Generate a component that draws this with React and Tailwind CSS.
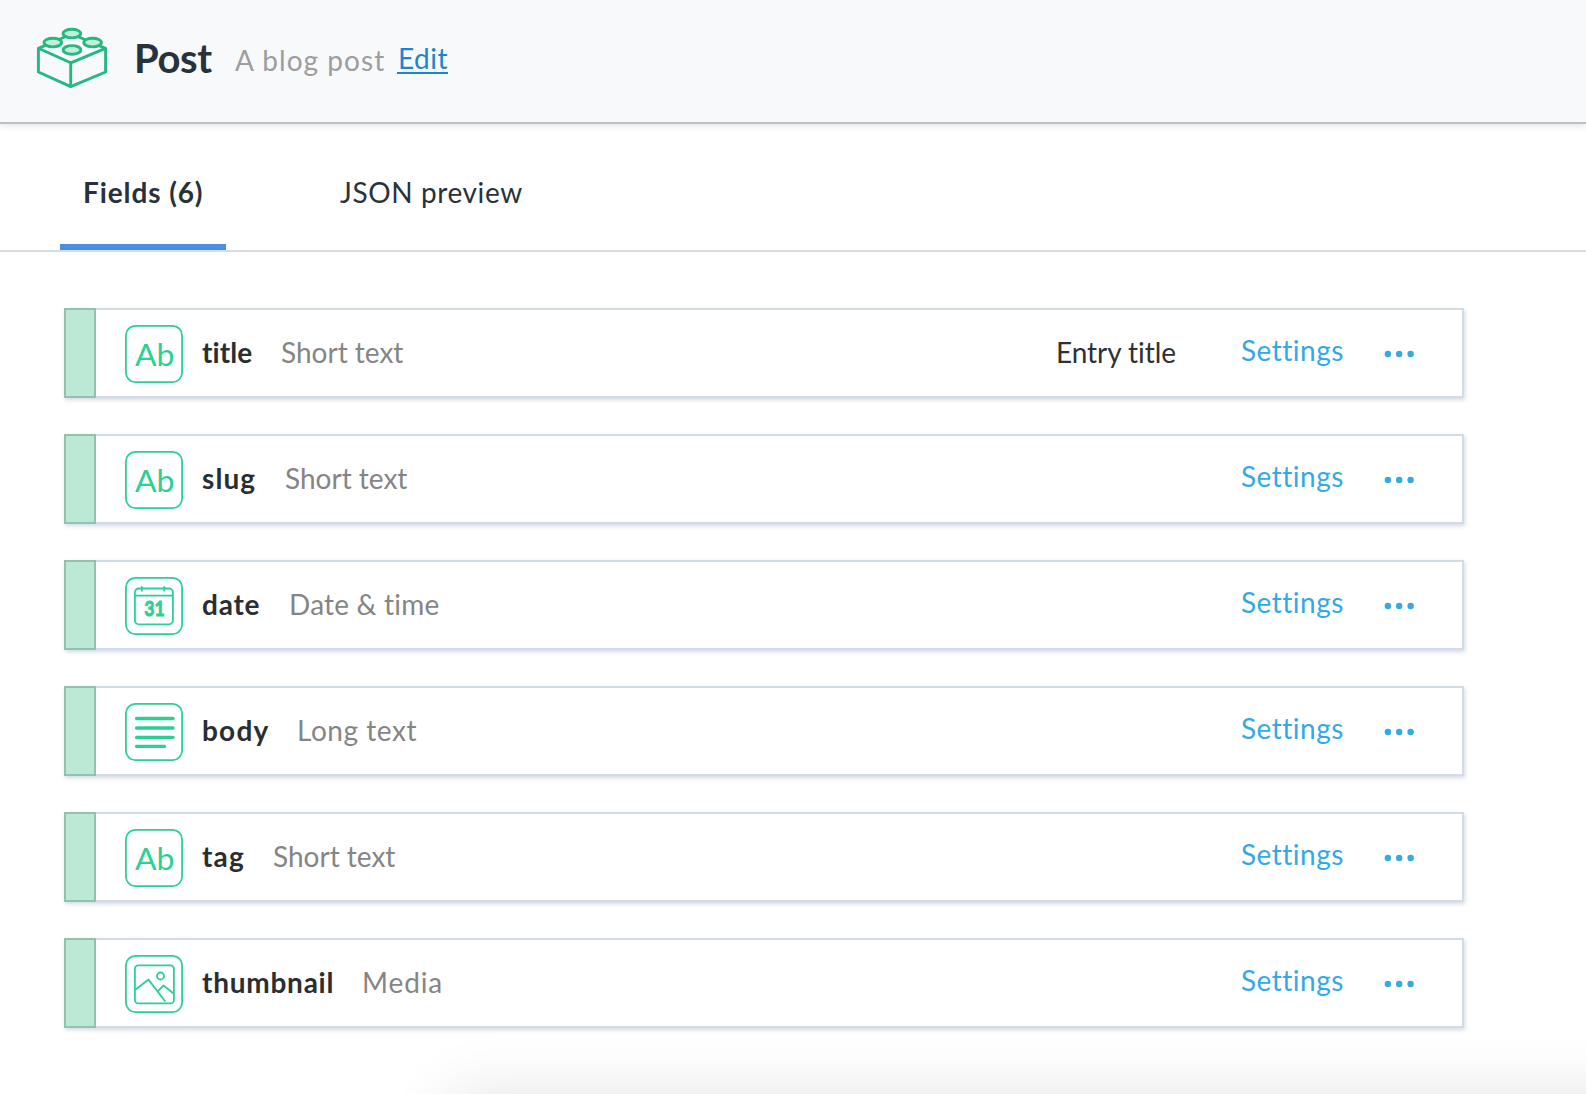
const FIELDS = [
  { icon: "text", name: "title", nameCls: "w-[79px] tracking-[0.1px]", type: "Short text", typeCls: "tracking-[0px]", note: "Entry title" },
  { icon: "text", name: "slug", nameCls: "w-[83px] tracking-[1.1px]", type: "Short text", typeCls: "tracking-[0px]" },
  { icon: "date", name: "date", nameCls: "w-[87px] tracking-[0.8px]", type: "Date & time", typeCls: "tracking-[0.2px]" },
  { icon: "long", name: "body", nameCls: "w-[95px] tracking-[1.2px]", type: "Long text", typeCls: "tracking-[0.55px]" },
  { icon: "text", name: "tag", nameCls: "w-[71px] tracking-[1.2px]", type: "Short text", typeCls: "tracking-[0px]" },
  { icon: "media", name: "thumbnail", nameCls: "w-[160px] tracking-[0.75px]", type: "Media", typeCls: "tracking-[0.9px]" },
];

function BrickLogo() {
  return (
    <svg className="h-[64px] w-[74px] shrink-0" viewBox="0 0 74 64" fill="none" stroke="#25b880" strokeWidth="2.9" strokeLinejoin="round">
      <path d="M2.4 22.3 35.7 8 69.6 22.3V46L34.7 60.6 2.4 46z" />
      <path d="M2.4 22.3 34.7 36.8 69.6 22.3M34.7 36.8V60.6" />
      <g fill="#c1f0d7">
        <ellipse cx="35.9" cy="7.6" rx="8.8" ry="4.3" />
        <ellipse cx="16.8" cy="16.6" rx="8.8" ry="4.3" />
        <ellipse cx="56.6" cy="16.6" rx="8.8" ry="4.3" />
        <ellipse cx="36" cy="23.9" rx="8.8" ry="4.3" />
      </g>
    </svg>
  );
}

function FieldIcon({ kind }) {
  return (
    <svg className="ml-[29px] h-[58px] w-[58px] shrink-0" viewBox="0 0 58 58" fill="none" stroke="#2bd093" strokeWidth="1.8">
      <rect x="0.9" y="0.9" width="56.2" height="56.2" rx="9.5" strokeWidth="1.8" />
      {kind === "text" && (
        <text x="10" y="41" fill="#2bd093" stroke="none" textLength="39.5" lengthAdjust="spacingAndGlyphs" className="font-[Lato] text-[30px]">
          Ab
        </text>
      )}
      {kind === "long" && (
        <path d="M11.6 15.5H48M11.6 25H48M11.6 34.4H48M11.6 43.4H39.5" strokeWidth="3.4" strokeLinecap="round" />
      )}
      {kind === "date" && (
        <>
          <rect x="9.9" y="11.5" width="38" height="35.8" rx="4" />
          <path d="M10 18.7H48M16.8 9.3V14.5M39.3 9.3V14.5" />
          <text x="19.2" y="38.8" fill="#2bd093" stroke="#2bd093" strokeWidth="0.9" textLength="20.5" lengthAdjust="spacingAndGlyphs" className="font-[Lato] text-[21px] font-bold">
            31
          </text>
        </>
      )}
      {kind === "media" && (
        <>
          <rect x="9.9" y="10.4" width="39" height="38" rx="3.5" />
          <circle cx="35.5" cy="21" r="3.5" />
          <path d="M10.3 34.7 23.5 24.6 40.3 46.5M32.8 36.2 38.6 30.5 48.5 38.5" />
        </>
      )}
    </svg>
  );
}

function FieldRow({ field }) {
  return (
    <li className="flex h-[90px] w-[1400px] border-2 border-l-0 border-[#d3dbe4] bg-white shadow-[1px_2px_4px_rgba(95,120,155,0.27)]">
      <div className="-my-[2px] w-[32px] shrink-0 border-2 border-[#90c2ad] bg-[#bce9d5]" />
      <div className="flex h-[86px] flex-1 items-start whitespace-nowrap text-[28px] leading-[36px]">
        <div className="pt-[15px]">
          <FieldIcon kind={field.icon} />
        </div>
        <span className={"ml-[19px] mt-[24px] shrink-0 font-bold text-[#2b2e31] " + field.nameCls}>{field.name}</span>
        <span className={"mt-[24px] text-[#858585] " + field.typeCls}>{field.type}</span>
        {field.note && <span className="ml-auto mr-[65px] mt-[24px] tracking-[-0.05px] text-[#2f3133]">{field.note}</span>}
        <a className={"mt-[22px] w-[103px] tracking-[0.5px] text-[#33a9e5] " + (field.note ? "" : "ml-auto")}>Settings</a>
        <svg className="ml-[39px] mr-[47px] mt-[40px] h-[8px] w-[32px]" viewBox="0 0 32 8" fill="#33a9e5">
          <circle cx="4.9" cy="4" r="3.2" />
          <circle cx="16.2" cy="4" r="3.2" />
          <circle cx="27.6" cy="4" r="3.2" />
        </svg>
      </div>
    </li>
  );
}

export default function App() {
  return (
    <div className="relative h-[1094px] w-[1586px] overflow-hidden bg-white font-[Lato,sans-serif]">
      <div className="absolute left-[450px] top-[1094px] h-[400px] w-[1500px] shadow-[0_0_60px_rgba(0,0,0,0.11)]" />
      <header className="relative flex h-[124px] items-start whitespace-nowrap border-b-2 border-[#b3c3c8] bg-[#f7f9fb] pl-[36px] pt-[26px] text-[28px] leading-[36px] shadow-[0_2px_7px_rgba(0,0,0,0.11)]">
        <BrickLogo />
        <h1 className="ml-[24px] mt-[8px] w-[101px] text-[40px] font-bold leading-[48px] tracking-[-0.4px] text-[#29323a]">Post</h1>
        <p className="mt-[16px] w-[162px] tracking-[1.05px] text-[#9d9d9d]">A blog post</p>
        <a className="mt-[14px] h-[34px] border-b-2 border-[#1f84d0] pl-px tracking-[0.5px] text-[#1f84d0]">Edit</a>
      </header>
      <nav className="flex h-[128px] whitespace-nowrap border-b-2 border-[#d5dce4] pl-[60px] text-[28px] leading-[36px] text-[#29323a]">
        <div className="h-[126px] w-[166px] border-b-6 border-[#4b90e0] pl-[23px] pt-[50px] font-bold tracking-[0.9px]">Fields (6)</div>
        <div className="ml-[114px] pt-[50px] tracking-[0.6px]">JSON preview</div>
      </nav>
      <ul className="relative ml-[64px] mt-[56px] flex flex-col gap-[36px]">
        {FIELDS.map((f) => (
          <FieldRow key={f.name} field={f} />
        ))}
      </ul>
    </div>
  );
}
